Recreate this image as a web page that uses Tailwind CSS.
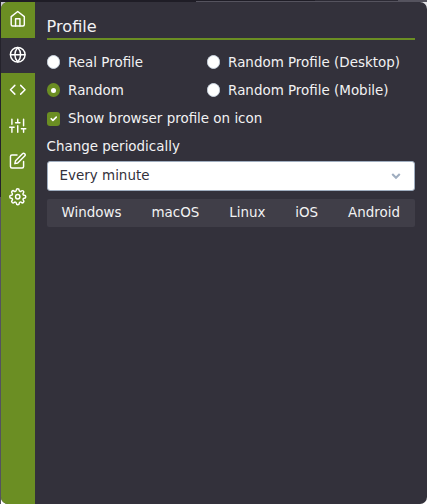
<!DOCTYPE html>
<html lang="en">
<head>
<meta charset="utf-8">
<title>Profile</title>
<script src="https://cdn.jsdelivr.net/npm/@tailwindcss/browser@4"></script>
</head>
<body class="h-[504px] w-[427px] overflow-hidden bg-[#1f1d26] font-['DejaVu_Sans',sans-serif] text-[13.44px] text-[#f2f2f3]">
<div class="relative h-[504px] w-[427px] pl-px pt-[2px]">
  <div class="absolute left-0 top-0 h-[197px] w-px bg-[#24222b]"></div>
  <div class="absolute left-0 top-[197px] h-[307px] w-px bg-[#55535f]"></div>
  <div class="absolute left-[196px] top-px h-px w-[231px] bg-[#55535e]"></div>
  <div class="absolute left-[315px] top-0 h-px w-[83px] bg-[#2c2a34]"></div>
  <div class="absolute left-[398px] top-0 h-px w-[29px] bg-[#55535e]"></div>
  <div class="absolute left-px top-[2px] size-2 bg-[#c9c9cf]"></div>
  <div class="absolute left-px top-[496px] size-2 bg-white"></div>
  <div class="absolute left-[419px] top-[2px] size-2 bg-[#e4e4e8]"></div>
  <div class="absolute left-[419px] top-[496px] size-2 bg-white"></div>
  <div class="relative flex h-[502px] w-[426px] overflow-hidden rounded-[7px] bg-[#33313b]">
    <nav class="w-[34px] shrink-0 bg-[#6b8e23] text-white">
      <div class="flex h-[35.5px] items-center justify-center pb-[2px]">
        <svg class="size-[17.500px]" viewBox="0 0 24 24" fill="none" stroke="currentColor" stroke-width="2" stroke-linecap="round" stroke-linejoin="round"><path d="M3 9l9-7 9 7v11a2 2 0 0 1-2 2H5a2 2 0 0 1-2-2z"/><path d="M9 22V12h6v10"/></svg>
      </div>
      <div class="flex h-[35.5px] items-center justify-center bg-[#33313b] pb-px">
        <svg class="size-[17.500px]" viewBox="0 0 24 24" fill="none" stroke="currentColor" stroke-width="2" stroke-linecap="round" stroke-linejoin="round"><circle cx="12" cy="12" r="10"/><path d="M2 12h20M12 2a15.3 15.3 0 0 1 4 10 15.3 15.3 0 0 1-4 10 15.3 15.3 0 0 1-4-10 15.3 15.3 0 0 1 4-10z"/></svg>
      </div>
      <div class="flex h-[35.5px] items-center justify-center pb-[2px]">
        <svg class="size-[17.500px]" viewBox="0 0 24 24" fill="none" stroke="currentColor" stroke-width="2" stroke-linecap="round" stroke-linejoin="round"><path d="M16 18l6-6-6-6M8 6l-6 6 6 6"/></svg>
      </div>
      <div class="flex h-[35.5px] items-center justify-center pb-px">
        <svg class="size-[17.500px]" viewBox="0 0 24 24" fill="none" stroke="currentColor" stroke-width="2" stroke-linecap="round" stroke-linejoin="round"><path d="M4 21v-7M4 10V3M12 21v-9M12 8V3M20 21v-5M20 12V3M1 14h6M9 8h6M17 16h6"/></svg>
      </div>
      <div class="flex h-[35.5px] items-center justify-center pb-[2px]">
        <svg class="size-[17.500px]" viewBox="0 0 24 24" fill="none" stroke="currentColor" stroke-width="2" stroke-linecap="round" stroke-linejoin="round"><path d="M11 4H4a2 2 0 0 0-2 2v14a2 2 0 0 0 2 2h14a2 2 0 0 0 2-2v-7"/><path d="M18.500 2.500a2.121 2.121 0 0 1 3 3L12 15l-4 1 1-4z"/></svg>
      </div>
      <div class="flex h-[35.5px] items-center justify-center pb-px">
        <svg class="size-[17.500px]" viewBox="0 0 24 24" fill="none" stroke="currentColor" stroke-width="2" stroke-linecap="round" stroke-linejoin="round"><circle cx="12" cy="12" r="3"/><path d="M19.400 15a1.650 1.650 0 0 0 .33 1.820l.06.06a2 2 0 0 1-2.830 2.830l-.06-.06a1.650 1.650 0 0 0-2.820 1.180V21a2 2 0 0 1-4 0v-.09A1.650 1.650 0 0 0 9 19.400a1.650 1.650 0 0 0-1.820.33l-.06.06a2 2 0 0 1-2.830-2.830l.06-.06a1.650 1.650 0 0 0-1.180-2.820H3a2 2 0 0 1 0-4h.09A1.650 1.650 0 0 0 4.600 9a1.650 1.650 0 0 0-.33-1.820l-.06-.06a2 2 0 0 1 2.830-2.830l.06.06a1.650 1.650 0 0 0 2.820-1.180V3a2 2 0 0 1 4 0v.09a1.650 1.650 0 0 0 2.820 1.180l.06-.06a2 2 0 0 1 2.830 2.830l-.06.06a1.650 1.650 0 0 0 1.180 2.820H21a2 2 0 0 1 0 4h-.09a1.650 1.650 0 0 0-1.510 1z"/></svg>
      </div>
    </nav>
    <main class="flex-1 pl-[11.600px] pr-3 pt-[12px]">
      <h1 class="h-[26px] border-b-2 border-[#6b8e23] text-[16.130px] leading-[26px]">Profile</h1>
      <div class="mt-[8px] grid grid-cols-[160px_1fr]">
        <label class="flex h-7 items-center gap-2"><span class="size-[13.500px] rounded-full border border-[#cbd5e0] bg-white"></span><span class="pt-[2px]">Real Profile</span></label>
        <label class="flex h-7 items-center gap-2"><span class="size-[13.500px] rounded-full border border-[#cbd5e0] bg-white"></span><span class="pt-[2px]">Random Profile (Desktop)</span></label>
        <label class="flex h-7 items-center gap-2"><span class="flex size-[13.500px] items-center justify-center rounded-full bg-[#6b8e23]"><span class="size-[5px] rounded-full bg-white"></span></span><span class="pt-[2px]">Random</span></label>
        <label class="flex h-7 items-center gap-2"><span class="size-[13.500px] rounded-full border border-[#cbd5e0] bg-white"></span><span class="pt-[2px]">Random Profile (Mobile)</span></label>
      </div>
      <label class="flex h-7 items-center gap-2"><span class="mt-[2px] size-[13.500px] rounded-[3px] bg-[#6b8e23]"><svg class="size-[13.500px]" viewBox="0 0 16 16" fill="white"><path d="M5.707 7.293a1 1 0 0 0-1.414 1.414l2 2a1 1 0 0 0 1.414 0l4-4a1 1 0 0 0-1.414-1.414L7 8.586 5.707 7.293z"/></svg></span><span class="pt-[2px]">Show browser profile on icon</span></label>
      <div class="h-7 leading-[30px]">Change periodically</div>
      <div class="mt-px flex h-[30px] items-center justify-between rounded-[3px] border border-[#a0aec0] bg-white pb-px pl-3 pr-[10px] text-[#33313b]"><span class="pt-[2px]">Every minute</span>
        <svg class="mt-px size-[16px] text-[#a0aec0]" viewBox="0 0 20 20" fill="none" stroke="currentColor" stroke-width="2.600"><path d="M5.300 7.500L10 12.200l4.700-4.700"/></svg>
      </div>
      <div class="mt-2 flex h-7 items-center justify-between rounded-[2px] bg-[#403e48] px-[15px] pt-px"><span>Windows</span><span>macOS</span><span>Linux</span><span>iOS</span><span>Android</span></div>
    </main>
  </div>
</div>
</body>
</html>
